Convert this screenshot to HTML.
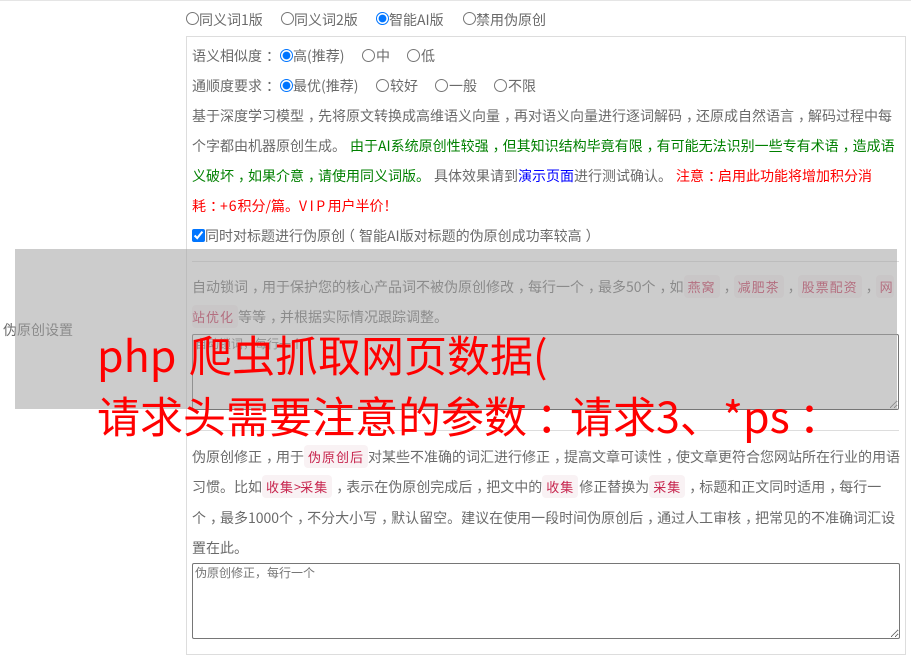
<!DOCTYPE html>
<html lang="zh"><head><meta charset="utf-8"><title>伪原创设置</title>
<style>
html,body{margin:0;padding:0;background:#fff}
body{width:911px;height:658px;overflow:hidden;position:relative;font:14px/20px "WenQuanYi Zen Hei","Noto Sans CJK SC",sans-serif;color:#6a6a6a}
.a{position:absolute;white-space:nowrap}
.l{position:absolute;left:192px;white-space:nowrap;height:20px}
u{text-decoration:none;position:relative;left:4px}
input[type=radio],input[type=checkbox]{position:absolute;margin:0;width:13px;height:13px}
code{font:13px/20px "WenQuanYi Zen Hei","Noto Sans CJK SC",sans-serif;background:#f9f2f4;color:#c7254e;padding:2px 4px;border-radius:4px;letter-spacing:1px}
textarea{position:absolute;box-sizing:border-box;margin:0;padding:2px;font:12px/14px "WenQuanYi Zen Hei","Noto Sans CJK SC",sans-serif;border:1px solid #767676;border-radius:2px;background:#fff}
.hr{position:absolute;left:192px;width:707px;height:1px;background:#ddd}
.ov{position:absolute;left:97px;white-space:nowrap;color:#f00;font-size:43px;line-height:60px;height:60px}
.ov u{left:9px}
</style></head><body>
<div class="a" style="left:0;top:0;width:911px;height:1px;background:#e5e5e5"></div>
<div class="a" style="left:186px;top:36px;width:718px;height:617px;border:1px solid #ddd"></div>

<input type="radio" name="a" style="left:186px;top:12px"><span class="a" style="left:199px;top:10px">同义词1版</span>
<input type="radio" name="a" style="left:281px;top:12px"><span class="a" style="left:294px;top:10px">同义词2版</span>
<input type="radio" name="a" checked style="left:376px;top:12px"><span class="a" style="left:389px;top:10px">智能AI版</span>
<input type="radio" name="a" style="left:463px;top:12px"><span class="a" style="left:476px;top:10px">禁用伪原创</span>

<span class="l" style="top:46px">语义相似度<u>：</u></span>
<input type="radio" name="b" checked style="left:280px;top:49px"><span class="a" style="left:293px;top:46px">高(推荐)</span>
<input type="radio" name="b" style="left:362px;top:49px"><span class="a" style="left:376px;top:46px">中</span>
<input type="radio" name="b" style="left:407px;top:49px"><span class="a" style="left:421px;top:46px">低</span>

<span class="l" style="top:76px">通顺度要求<u>：</u></span>
<input type="radio" name="c" checked style="left:280px;top:79px"><span class="a" style="left:293px;top:76px">最优(推荐)</span>
<input type="radio" name="c" style="left:376px;top:79px"><span class="a" style="left:390px;top:76px">较好</span>
<input type="radio" name="c" style="left:435px;top:79px"><span class="a" style="left:449px;top:76px">一般</span>
<input type="radio" name="c" style="left:494px;top:79px"><span class="a" style="left:508px;top:76px">不限</span>

<span class="l" style="top:106px">基于深度学习模型<u>，</u>先将原文转换成高维语义向量<u>，</u>再对语义向量进行逐词解码<u>，</u>还原成自然语言<u>，</u>解码过程中每</span>
<span class="l" style="top:136px">个字都由机器原创生成。<span style="color:#008000;margin-left:4px">由于AI系统原创性较强<u>，</u>但其知识结构毕竟有限<u>，</u>有可能无法识别一些专有术语<u>，</u>造成语</span></span>
<span class="l" style="top:166px"><span style="color:#008000">义破坏<u>，</u>如果介意<u>，</u>请使用同义词版。</span><span style="margin-left:4px">具体效果请到</span><span style="color:#00f">演示页面</span>进行测试确认。<span style="color:#f00;margin-left:4px">注意<u>：</u>启用此功能将增加积分消</span></span>
<span class="l" style="top:196px;color:#f00">耗<u>：</u><span style="letter-spacing:1px">+6</span>积分/篇。<span style="letter-spacing:2.5px">VIP</span>用户半价！</span>

<input type="checkbox" checked style="left:192px;top:229px"><span class="a" style="left:205px;top:226px">同时对标题进行伪原创<u style="left:-4px">（</u>智能AI版对标题的伪原创成功率较高<u>）</u></span>

<div class="hr" style="top:261px"></div>
<span class="l" style="top:277px">自动锁词<u>，</u>用于保护您的核心产品词不被伪原创修改<u>，</u>每行一个<u>，</u>最多50个<u>，</u>如<code>燕窝</code><u>，</u><code>减肥茶</code><u>，</u><code>股票配资</code><u>，</u><code style="padding-right:0">网</code></span>
<span class="l" style="top:307px"><code style="padding-left:0">站优化</code>等等<u>，</u>并根据实际情况跟踪调整。</span>
<textarea placeholder="自动锁词，每行一个" style="left:192px;top:334px;width:707px;height:76px"></textarea>

<div class="hr" style="top:430px"></div>
<span class="l" style="top:447px">伪原创修正<u>，</u>用于<code>伪原创后</code>对某些不准确的词汇进行修正<u>，</u>提高文章可读性<u>，</u>使文章更符合您网站所在行业的用语</span>
<span class="l" style="top:477px">习惯。比如<code>收集<span style="letter-spacing:-1px">&gt;</span>采集</code><u>，</u>表示在伪原创完成后<u>，</u>把文中的<code>收集</code><span style="margin-left:1px">修正替换为</span><code>采集</code><u>，</u>标题和正文同时适用<u>，</u>每行一</span>
<span class="l" style="top:508px">个<u>，</u>最多1000个<u>，</u>不分大小写<u>，</u>默认留空。建议在使用一段时间伪原创后<u>，</u>通过人工审核<u>，</u>把常见的不准确词汇设</span>
<span class="l" style="top:538px">置在此。</span>
<textarea placeholder="伪原创修正，每行一个" style="left:192px;top:563px;width:708px;height:76px"></textarea>

<span class="a" style="left:3px;top:320px">伪原创设置</span>
<div class="a" style="left:15px;top:249px;width:882px;height:160px;background:rgba(165,165,165,.57)"></div>
<div class="ov" style="top:324px;word-spacing:3px">php 爬虫抓取网页数据(</div>
<div class="ov" style="top:385px">请求头需要注意的参数<u>：</u>请求3、*ps<u>：</u></div>
</body></html>
